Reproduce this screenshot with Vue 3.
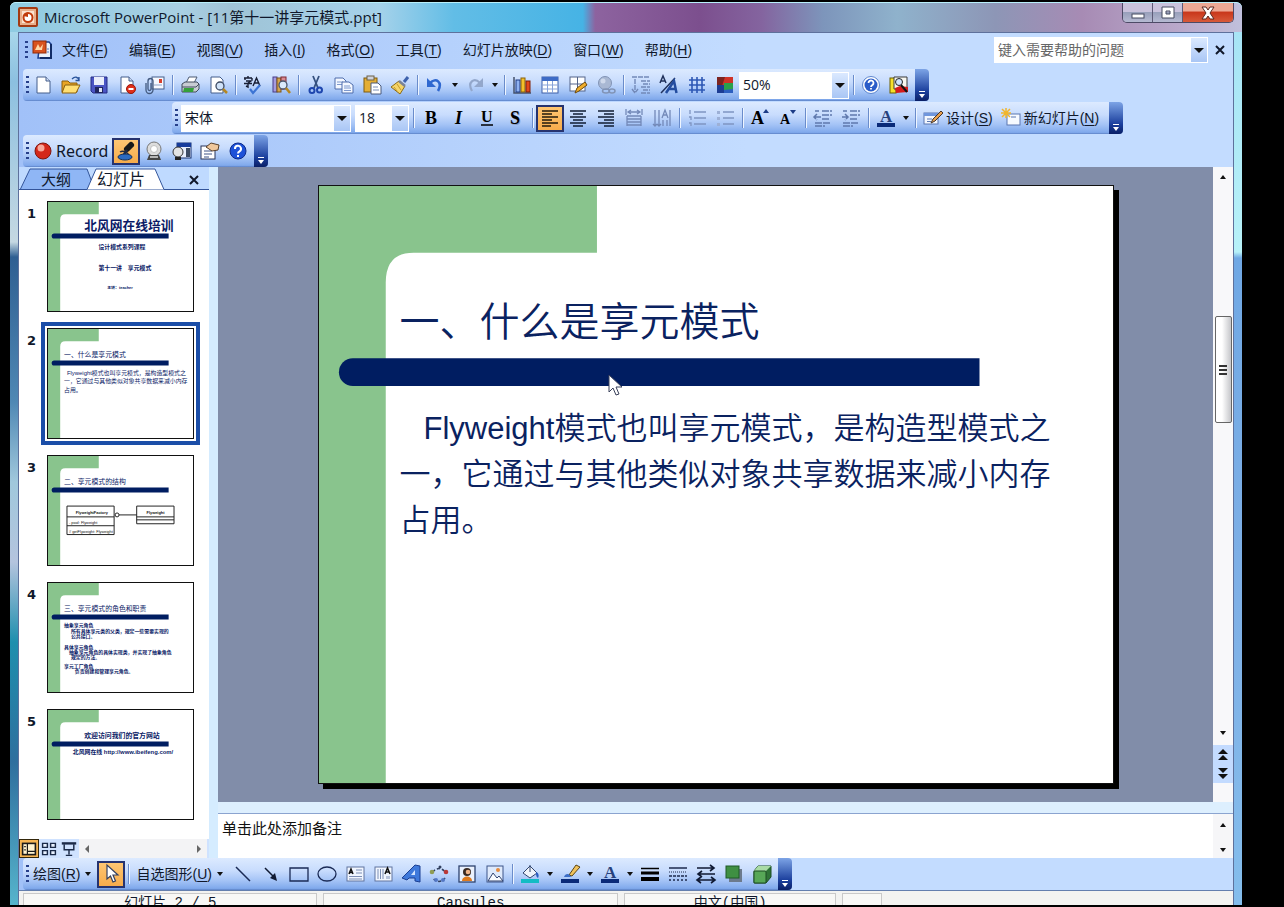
<script setup>
import { h } from 'vue'

const art = {
  app: '<rect x="1" y="1" width="18" height="18" rx="1" fill="#e9b08c" stroke="#a33a12" stroke-width="2"/><rect x="4" y="4" width="12" height="12" fill="#fbe3cf"/><circle cx="10" cy="10.500" r="4.500" fill="#fff" stroke="#c23c0c" stroke-width="2"/><path d="M10 10V5.500A5 5 0 0 0 5.500 9z" fill="#c23c0c"/>',
  doc: '<path d="M8 2h9l2 2v14H6z" fill="#e8f0fb" stroke="#1d3f8f" stroke-width="1.500"/><path d="M19 4v14H8" fill="none" stroke="#122c66" stroke-width="2"/><rect x="1" y="1" width="13" height="12" fill="#d9531e" stroke="#8f2a08"/><path d="M3 10l3-6 2 4 3-4-1 6z" fill="#ffd9a8"/><path d="M15 9h2M15 12h2" stroke="#5b7dc0"/>',
  new: '<path d="M4 2h9l4 4v12H4z" fill="#fff" stroke="#445e8c"/><path d="M13 2v4h4" fill="#cfdcf3" stroke="#445e8c"/>',
  open: '<path d="M1 6h6l2 2h7v9H1z" fill="#e8a526" stroke="#8a5e0c"/><path d="M4 10h15l-4 8H1z" fill="#ffdf73" stroke="#8a5e0c"/><path d="M11 4c3-3 6-2 7 1M18 2v3.500h-3.500" fill="none" stroke="#2a559c" stroke-width="1.300"/>',
  save: '<path d="M2 2h16v16H4l-2-2z" fill="#4b55c4" stroke="#252d85"/><rect x="5" y="2" width="10" height="8" fill="#e9edfb"/><rect x="6" y="12" width="8" height="6" fill="#20265f"/><rect x="10" y="13" width="3" height="4" fill="#dfe4f7"/>',
  perm: '<path d="M4 2h8l4 4v12H4z" fill="#fff" stroke="#445e8c"/><path d="M12 2v4h4" fill="#cfdcf3" stroke="#445e8c"/><circle cx="14" cy="14" r="4.500" fill="#df2f1b" stroke="#9c1608"/><path d="M11.500 14h5" stroke="#fff" stroke-width="2"/>',
  mail: '<rect x="7" y="2" width="12" height="12" fill="#f6f9ff" stroke="#445e8c"/><rect x="14" y="4" width="3" height="4" fill="#d8402a"/><path d="M9 10h8" stroke="#8fa3c8"/><path d="M1 8v7a3.500 3.500 0 0 0 7 0V6a2.500 2.500 0 0 0-5 0v8a1 1 0 0 0 3 0V8" fill="none" stroke="#42597f" stroke-width="1.300"/>',
  print: '<path d="M6 8l3-6h8l-3 6z" fill="#fff" stroke="#4c5a72"/><path d="M2 9l3-2h12l2 2v5l-3 3H2z" fill="#c8ccd3" stroke="#424c5e"/><path d="M2 12h14l3-3" fill="none" stroke="#424c5e"/><path d="M4 13h10l-1 4H3z" fill="#35a03b"/>',
  preview: '<path d="M3 2h9l3 3v13H3z" fill="#fff" stroke="#445e8c"/><circle cx="12" cy="11" r="4" fill="#cfe2f8" stroke="#3d4b63" stroke-width="1.300"/><path d="M15 14l4 4" stroke="#b58722" stroke-width="2.500"/>',
  spell: '<path d="M1 3h8M5 1v2M2 3v2M9 3v2M3 6h5L5 8v4l-2-1M1 8.500h8M10 11l3.500-8L17 11M11.500 8h4" fill="none" stroke="#161d33" stroke-width="1.400"/><path d="M7 14l3 4 7-8" fill="none" stroke="#3c74d4" stroke-width="2.200"/>',
  research: '<rect x="2" y="2" width="4" height="15" fill="#a59be0" stroke="#463c88"/><rect x="6" y="3" width="4" height="14" fill="#d6a64f" stroke="#7b5519"/><rect x="10" y="2" width="5" height="12" fill="#d98a92" stroke="#7d2932"/><circle cx="12" cy="10" r="4" fill="#dbe9fb" stroke="#49546a" stroke-width="1.300"/><path d="M15 13l4 5" stroke="#b58722" stroke-width="2.500"/>',
  cut: '<path d="M7 1l5 12M13 1L8 13" stroke="#35517f" stroke-width="1.800" fill="none"/><circle cx="6" cy="15.500" r="2.500" fill="none" stroke="#1e46ae" stroke-width="2"/><circle cx="13.500" cy="15" r="2.500" fill="none" stroke="#1e46ae" stroke-width="2"/>',
  copy: '<path d="M1 3h8l3 3v8H1z" fill="#f3f7ff" stroke="#4f6dab"/><path d="M3 7h6M3 9.500h6" stroke="#7d98cd"/><path d="M8 7h7l4 3v8H8z" fill="#f3f7ff" stroke="#4f6dab"/><path d="M10 11h6M10 13h7M10 15.500h7" stroke="#7d98cd"/>',
  paste: '<rect x="2" y="3" width="13" height="14" fill="#e4ae35" stroke="#7d5a11"/><rect x="5" y="1" width="7" height="4" fill="#cfd3dc" stroke="#6d6147"/><path d="M9 8h7l3 3v8H9z" fill="#fff" stroke="#4a5a7c"/><path d="M11 12h5M11 15h6" stroke="#7d8fb6"/>',
  brush: '<path d="M14 7l4-5" stroke="#3e62ad" stroke-width="3"/><path d="M9 6l6 5-5 8-9-7z" fill="#f5d569" stroke="#8d6b14"/><path d="M9 6l6 5" stroke="#7b8395" stroke-width="2.500"/><path d="M4 12l3 4M7 9l4 6" stroke="#c79a29"/>',
  undo: '<path d="M5 8c6-6 13-1 8 8" fill="none" stroke="#2f68d0" stroke-width="2.600"/><path d="M2 3v9h9z" fill="#2f68d0"/>',
  redo: '<path d="M15 8C9 2 2 7 7 16" fill="none" stroke="#93a7cb" stroke-width="2.200"/><path d="M18 3v9H9z" fill="#93a7cb"/>',
  chart: '<path d="M2 2v16h17" fill="none" stroke="#45516b" stroke-width="1.500"/><rect x="4" y="5" width="4" height="12" fill="#8fb2f2" stroke="#1e3a82"/><rect x="9" y="3" width="4" height="14" fill="#f3c02a" stroke="#8a6109"/><rect x="14" y="6" width="4" height="11" fill="#e2471c" stroke="#7e1f05"/>',
  table: '<rect x="2" y="2" width="16" height="16" fill="#fff" stroke="#3c5fa8"/><rect x="2" y="2" width="16" height="4" fill="#3d6bc6"/><path d="M7.500 6v12M12.500 6v12M2 10h16M2 14h16" stroke="#87a2d8"/>',
  draw: '<rect x="2" y="2" width="15" height="14" fill="#fff" stroke="#54658a"/><path d="M9.500 2v14M2 9h15" stroke="#54658a"/><path d="M7 18l2-5 8-6 2 3-8 6z" fill="#f1ae2b" stroke="#6c4a0d"/>',
  link: '<circle cx="9" cy="8" r="6.500" fill="#a9b8d3" stroke="#8193b5"/><circle cx="7" cy="6" r="2.500" fill="#cfd9eb"/><ellipse cx="10" cy="16" rx="3.500" ry="2" fill="none" stroke="#8193b5" stroke-width="1.500"/><ellipse cx="16" cy="16" rx="3" ry="2" fill="none" stroke="#8193b5" stroke-width="1.500"/>',
  expand: '<path d="M1 2h18M4 4v13M1 14l3 4 3-4M10 6h9M12 9h7M10 12h9M12 15h7M10 18h9" fill="none" stroke="#7389b8" stroke-width="1.400" stroke-dasharray="5 1"/>',
  format: '<path d="M1 8l3-7 3 7M2 6h4M2 18L16 3" fill="none" stroke="#20315c" stroke-width="1.500"/><path d="M7 18l8-12 2.500 12M10.500 14h6" fill="none" stroke="#234c9f" stroke-width="2.500"/>',
  grid: '<path d="M5 2v16M10 2v16M15 2v16M2 5h16M2 10h16M2 15h16" stroke="#2e58b5" stroke-width="1.600"/>',
  color: '<rect x="2" y="2" width="16" height="16" fill="#2d5fc0"/><path d="M2 2h16v8H2z" fill="#cf3327"/><path d="M2 2h8l-3 9H2z" fill="#7c2420"/><path d="M9 8h9v6l-9 1z" fill="#2aa04a"/><path d="M2 10h7v8H2z" fill="#1c3c94"/>',
  help: '<circle cx="10" cy="10" r="8.500" fill="#fff" stroke="#5d86cf"/><circle cx="10" cy="10" r="6.500" fill="#2a5cc8"/><path d="M7.500 8a2.500 2.500 0 1 1 4 2c-1 .7-1.500 1-1.500 2M10 13v1.500" fill="none" stroke="#fff" stroke-width="1.800"/>',
  book: '<rect x="1" y="3" width="6" height="15" fill="#f6e12a" stroke="#6c5f00"/><path d="M5 2h13v12H5z" fill="#f7f7f0" stroke="#3b3b3b"/><path d="M6 13l5-2 8 1v5l-12 1z" fill="#d51c1c"/><circle cx="10" cy="7" r="3.500" fill="#cfe4ff" stroke="#222"/><path d="M12 10l6 7" stroke="#111" stroke-width="2"/>',
  bold: '<text x="4" y="16" font-family="Liberation Serif, serif" font-weight="bold" font-size="18">B</text>',
  italic: '<text x="6" y="16" font-family="Liberation Serif, serif" font-style="italic" font-weight="bold" font-size="18">I</text>',
  under: '<text x="4" y="14" font-family="Liberation Serif, serif" font-weight="bold" font-size="16">U</text><path d="M4 17h12" stroke="#000" stroke-width="1.500"/>',
  shadow: '<text x="5" y="16" font-family="Liberation Serif, serif" font-weight="bold" font-size="18" style="text-shadow:1px 1px #8ba1cc">S</text>',
  left: '<path d="M2 3h16M2 6h10M2 9h16M2 12h10M2 15h16M2 18h9" stroke="#231b0c" stroke-width="1.600"/>',
  center: '<path d="M2 3h16M5 6h10M2 9h16M5 12h10M2 15h16M5 18h10" stroke="#111c33" stroke-width="1.600"/>',
  right: '<path d="M2 3h16M8 6h10M2 9h16M8 12h10M2 15h16M8 18h10" stroke="#111c33" stroke-width="1.600"/>',
  spread: '<path d="M2 1v6M18 1v6M4 4h12M3 8h14M3 11h14M3 14h14M3 17h14M3 8v10M17 8v10M7 2L4 4l3 2M13 2l3 2-3 2" fill="none" stroke="#7389b8" stroke-width="1.300"/>',
  vert: '<path d="M3 2v16M7 2v16M11 12v6M15 12v6M18 2v16M1 16l2 2 2-2M5 16l2 2 2-2M10 10l3-8 3 8M11 7h4" fill="none" stroke="#7389b8" stroke-width="1.300"/>',
  num: '<path d="M7 4h12M7 10h12M7 16h12M3 2v4M2 9h2v3M2 15h2v3" fill="none" stroke="#7f95c2" stroke-width="1.300"/>',
  bul: '<path d="M8 4h11M8 10h11M8 16h11" stroke="#7f95c2" stroke-width="1.300"/><path d="M2 3h3v3H2zM2 9h3v3H2zM2 15h3v3H2z" fill="#9db0d6"/>',
  bigger: '<text x="1" y="16" font-family="Liberation Serif, serif" font-weight="bold" font-size="18">A</text><path d="M13 5l3-4 3 4z" fill="#1d3c86"/>',
  smaller: '<text x="2" y="16" font-family="Liberation Serif, serif" font-weight="bold" font-size="14">A</text><path d="M12 2h6l-3 4z" fill="#1d3c86"/>',
  outdent: '<path d="M9 3h10M9 7h10M9 11h7M2 15h16M2 18h10M8 9H2M4 6L1 9l3 3M2 3h4" fill="none" stroke="#5f78ad" stroke-width="1.500" stroke-dasharray="7 1"/>',
  indent: '<path d="M9 3h10M9 7h10M9 11h7M2 15h16M2 18h10M1 9h5M4 6l3 3-3 3M2 3h4" fill="none" stroke="#5f78ad" stroke-width="1.500" stroke-dasharray="7 1"/>',
  fontcolor: '<text x="4" y="14" font-family="Liberation Serif, serif" font-weight="bold" font-size="17" fill="#27417c">A</text><rect x="1" y="15" width="18" height="4" fill="#0a2a78"/>',
  design: '<rect x="1" y="5" width="14" height="11" fill="#f4f8ff" stroke="#5b77b1"/><rect x="1" y="5" width="14" height="3" fill="#6f96dd"/><path d="M4 11h5M4 13.500h4" stroke="#5b77b1"/><path d="M8 15l2-4 8-8 2 2-8 8z" fill="#e9a04e" stroke="#45352a"/>',
  slide: '<rect x="6" y="6" width="13" height="11" fill="#f7faff" stroke="#5b77b1"/><path d="M10 9h5" stroke="#5b77b1"/><path d="M5 0v10M0 5h10M1 1l8 8M9 1L1 9" stroke="#f2b62c" stroke-width="1.500"/>',
  rec: '<circle cx="10" cy="10" r="8" fill="#d4281b" stroke="#7d1710"/><circle cx="8" cy="7" r="3.500" fill="#f8a99c"/>',
  mic: '<path d="M11 8l4-4" stroke="#191919" stroke-width="6" stroke-linecap="round"/><path d="M11 9l-4 6" stroke="#222b44" stroke-width="2.500"/><path d="M4 11c3-2 8 0 9 4" fill="none" stroke="#222b44" stroke-width="1.500"/><ellipse cx="9" cy="16" rx="7" ry="3" fill="#2c6ac0" stroke="#12305f"/>',
  cam: '<circle cx="10" cy="8" r="7" fill="#dcdcdc" stroke="#777"/><circle cx="10" cy="8" r="3.500" fill="#fff" stroke="#c0c0c0"/><path d="M5 14h10l2 5H3z" fill="#444"/><path d="M6 16h8" stroke="#ddd" stroke-width="1.500"/>',
  screen: '<rect x="5" y="2" width="14" height="15" fill="#e8eefb" stroke="#16306f"/><rect x="5" y="2" width="14" height="4" fill="#173c9c"/><path d="M14 7h4v9h-4z" fill="#3d4b63"/><circle cx="6" cy="11" r="5" fill="#e4e4e4" stroke="#333"/><path d="M3 16h6v3H3z" fill="#222"/>',
  props: '<rect x="1" y="5" width="14" height="13" fill="#fff" stroke="#29355a"/><path d="M4 10h8M4 13h8M4 16h5" stroke="#3c5286"/><path d="M6 6l5-4 8 2-1 5-6 1-3-2z" fill="#efc79c" stroke="#57402c"/>',
  ask: '<circle cx="10" cy="10" r="8" fill="#1d51d8" stroke="#0d2b8b"/><path d="M7 8a3 3 0 1 1 4.500 2.300C10.300 11 10 11.500 10 12.500M10 14v2" fill="none" stroke="#fff" stroke-width="2"/>',
  pointer: '<path d="M6 1v14l3.500-3 2.500 6 2.500-1-2.500-6h5z" fill="#fff" stroke="#333f5f" stroke-width="1.200"/>',
  line: '<path d="M3 3l14 14" stroke="#1a2a55" stroke-width="1.500"/>',
  arrow: '<path d="M4 4l9 9" stroke="#101a33" stroke-width="1.500"/><path d="M16 17l-2-8-5 5z" fill="#101a33"/>',
  rect: '<path d="M1 4h18v13H1z" fill="none" stroke="#1a2a55" stroke-width="1.300"/>',
  oval: '<ellipse cx="10" cy="10" rx="9" ry="7" fill="none" stroke="#1a2a55" stroke-width="1.300"/>',
  tbox: '<rect x="2" y="3" width="17" height="14" fill="#f1f6ff" stroke="#60749f"/><path d="M4 10l2-5 2 5M5 8.500h2" fill="none" stroke="#111" stroke-width="1.500"/><path d="M11 6h6M11 9h6M4 12.500h13M4 15h13" stroke="#7d8fb6"/>',
  vbox: '<rect x="2" y="3" width="17" height="14" fill="#f1f6ff" stroke="#60749f"/><path d="M5 5v10M7.500 5v10M10 5v10M14 12v3M16 12v3" stroke="#7d8fb6"/><path d="M12 10l2.500-6L17 10M13 8h3" fill="none" stroke="#111" stroke-width="1.500"/>',
  wordart: '<path d="M1 14L14 1l5 1v16l-5-1v-3H8l-2 2z" fill="#3f79db" stroke="#1b3f93"/><path d="M10 11l4-5v5z" fill="#d6e6ff"/>',
  diagram: '<path d="M4 8a7 7 0 0 1 12 0M16 14a7 7 0 0 1-12 0" fill="none" stroke="#31405f" stroke-width="1.500" stroke-dasharray="3 2"/><circle cx="3" cy="8" r="2.300" fill="#8f9c54"/><circle cx="17" cy="8" r="2.300" fill="#b93838"/><circle cx="7" cy="16" r="2" fill="#5377c4"/><circle cx="14" cy="16" r="2" fill="#5377c4"/><circle cx="11" cy="3" r="1.500" fill="#31405f"/>',
  clip: '<rect x="2" y="2" width="16" height="16" fill="#eaf1fd" stroke="#2d426f" stroke-width="1.300"/><circle cx="10" cy="8" r="4" fill="#3a2a22"/><circle cx="11" cy="8" r="2.300" fill="#f0b489"/><path d="M5 17c0-6 10-6 10 0z" fill="#df7a1d"/>',
  pic: '<rect x="2" y="2" width="16" height="16" fill="#dfeafc" stroke="#3c5589"/><circle cx="13" cy="6" r="2" fill="#e58b3e"/><path d="M3 17l5-8 4 5 2-2 4 5z" fill="#f9fbff" stroke="#2f4270"/>',
  fill: '<path d="M3 9l7-7 7 7-7 5z" fill="#f0f4fb" stroke="#33466f"/><path d="M10 1v7" stroke="#33466f"/><path d="M16 8c3 1 3 4 2 6-2-1-2-3-2-6z" fill="#2b5cc0"/><rect x="1" y="15" width="18" height="4" fill="#12bcc4"/>',
  ink: '<path d="M9 11l7-10 4 2-8 9z" fill="#f0c25c" stroke="#5b4513"/><path d="M4 13c1-4 6-4 7 0z" fill="#3b6dc6"/><rect x="1" y="15" width="18" height="4" fill="#0a2a78"/>',
  weight: '<path d="M1 4.500h18" stroke="#000" stroke-width="1.500"/><path d="M1 9h18" stroke="#000" stroke-width="3"/><path d="M1 15h18" stroke="#000" stroke-width="4"/>',
  dash: '<path d="M1 4h18" stroke="#1d2a4c" stroke-width="1.500"/><path d="M1 8h18" stroke="#1d2a4c" stroke-dasharray="1 1"/><path d="M1 12h18" stroke="#1d2a4c" stroke-width="1.500" stroke-dasharray="3 1"/><path d="M1 16h18" stroke="#1d2a4c" stroke-width="1.500" stroke-dasharray="2 2"/>',
  arrows: '<path d="M1 4h17M2 10h17M1 16h18M14 1l4 3-4 3M6 7l-4 3 4 3M5 13l-4 3 4 3M15 13l4 3-4 3" fill="none" stroke="#101a33" stroke-width="1.600"/>',
  shade: '<rect x="5" y="5" width="13" height="13" fill="#6c7a8d"/><rect x="2" y="2" width="13" height="12" fill="#3f8f42" stroke="#1f5a26"/>',
  cube: '<path d="M2 7l4-5h13v11l-5 6H2z" fill="#2f7437" stroke="#1d4d24"/><path d="M2 7l4-5h13l-5 5z" fill="#a9dba5"/><rect x="2" y="7" width="12" height="12" rx="1" fill="#57a757" stroke="#1d4d24"/>',
  normal: '<rect x="2" y="3" width="16" height="14" fill="#fff3cf" stroke="#1b1b1b" stroke-width="2"/><path d="M8 3v14M8 13h10M4 7h2M4 11h2" stroke="#1b1b1b" stroke-width="1.500"/>',
  sorter: '<path d="M2 3h6v5H2zM12 3h6v5h-6zM2 12h6v5H2zM12 12h6v5h-6z" fill="#e9f2ff" stroke="#1b2a48" stroke-width="1.800"/>',
  show: '<path d="M1 3h18" stroke="#1b2a48" stroke-width="3"/><path d="M4 4v7h12V4M10 11v6M6 18h8" fill="none" stroke="#1b2a48" stroke-width="1.800"/>'
}

const Icon = (props) => h('svg', { class: 'icon', viewBox: '0 0 20 20', 'aria-hidden': 'true', innerHTML: art[props.name] })
Icon.props = ['name']

const SlideArt = () => h('svg', { class: 'slide-art', viewBox: '0 0 797 600', preserveAspectRatio: 'none', 'aria-hidden': 'true', innerHTML:
  '<path d="M0 0H279V67H95Q67 67 67 97V600H0Z" fill="#89c48d"/><path d="M34 173H663V201H34a14 14 0 0 1 0-28Z" fill="#001d61"/>' })

const menus = [['文件', 'F'], ['编辑', 'E'], ['视图', 'V'], ['插入', 'I'], ['格式', 'O'], ['工具', 'T'], ['幻灯片放映', 'D'], ['窗口', 'W'], ['帮助', 'H']]

const parse = (s) => s.split(' ').map((n) => ({ n }))
const standard = parse('new open save perm mail | print preview | spell research | cut copy paste brush | undo v redo v | chart table draw link | expand format grid color')
const standardEnd = parse('| help book')
const formatting = parse('| bold italic under shadow | left* center right spread vert | num bul | bigger smaller | outdent indent | fontcolor v |')
const recording = parse('mic* cam screen props ask')
const shapes = parse('line arrow rect oval tbox vbox wordart diagram clip pic | fill v ink v fontcolor v weight dash arrows shade cube')

const Tools = (props) => props.items.map((it) => {
  if (it.n === '|') return h('i', { class: 'sep' })
  if (it.n === 'v') return h('button', { class: 'drop', type: 'button', 'aria-label': '更多' }, [h('i', { class: 'tri' })])
  const on = it.n.endsWith('*')
  const name = it.n.replace('*', '')
  return h('button', { class: ['tool', { on }], type: 'button', 'aria-label': name }, [h(Icon, { name })])
})
Tools.props = ['items']

const thumbs = [
  { lines: [[82, 29, 13, '北风网在线培训', 'b m'], [75, 48, 6, '设计模式系列课程', 'b m'], [78, 69, 6, '第十一讲　享元模式', 'b m'], [73, 89, 4, '主讲：teacher', 'b m']] },
  { active: true, lines: [[16, 29, 7, '一、什么是享元模式', ''], [19, 47, 6, 'Flyweight模式也叫享元模式，是构造型模式之', ''], [16, 55, 6, '一，它通过与其他类似对象共享数据来减小内存', ''], [16, 64, 6, '占用。', '']] },
  { uml: true, lines: [[16, 29, 7, '二、享元模式的结构', '']] },
  { lines: [[16, 29, 7, '三、享元模式的角色和职责', ''], [16, 45, 5, '抽象享元角色', 'b'], [23, 51, 5, '所有具体享元类的父类，规定一些需要实现的', 'b'], [23, 56, 5, '公共接口。', 'b'], [16, 67, 5, '具体享元角色', 'b'], [21, 72, 5, '抽象享元角色的具体实现类，并实现了抽象角色', 'b'], [23, 77, 5, '规定的方法。', 'b'], [16, 87, 5, '享元工厂角色', 'b'], [27, 92, 5, '负责创建和管理享元角色。', 'b']] },
  { lines: [[75, 29, 7, '欢迎访问我们的官方网站', 'b m'], [76, 45, 6, '北风网在线 http://www.ibeifeng.com/', 'b m']] }
]
</script>

<template>
  <main class="desktop">
    <div class="window">
      <header class="titlebar">
        <Icon name="app" />
        <h1>Microsoft PowerPoint - [11第十一讲享元模式.ppt]</h1>
        <div class="caption">
          <button type="button" aria-label="最小化"><svg viewBox="0 0 16 14"><rect x="2" y="8" width="12" height="4" fill="#fff" stroke="#444a60" /></svg></button>
          <button type="button" aria-label="最大化"><svg viewBox="0 0 16 14"><path d="M2 1h12v11H2zM6 5v3h4V5z" fill="#fff" fill-rule="evenodd" stroke="#444a60" /></svg></button>
          <button type="button" class="close" aria-label="关闭"><svg viewBox="0 0 16 14"><path d="M2 1h4l2 3 2-3h4l-4 6 4 6h-4L8 10l-2 3H2l4-6z" fill="#fff" stroke="#5d2920" /></svg></button>
        </div>
      </header>

      <div class="frame">
        <nav class="menubar">
          <i class="grip"></i>
          <Icon name="doc" />
          <button v-for="m in menus" :key="m[1]" type="button" class="menu">{{ m[0] }}(<u>{{ m[1] }}</u>)</button>
          <div class="ask">
            <input type="text" placeholder="键入需要帮助的问题" aria-label="键入需要帮助的问题" />
            <button type="button" class="arrowbox" aria-label="展开"><i class="tri big"></i></button>
          </div>
          <button type="button" class="x" aria-label="关闭文档"><svg viewBox="0 0 10 10"><path d="M1 1l8 8M9 1L1 9" /></svg></button>
        </nav>

        <div class="bars">
          <div class="toolbar">
            <i class="grip"></i>
            <Tools :items="standard" />
            <div class="combo zoom"><select aria-label="显示比例"><option>50%</option></select><span class="arrowbox"><i class="tri big"></i></span></div>
            <Tools :items="standardEnd" />
            <button type="button" class="end" aria-label="工具栏选项"><i class="tri light"></i></button>
          </div>
          <div class="toolbar second">
            <i class="grip"></i>
            <div class="combo font"><select aria-label="字体"><option>宋体</option></select><span class="arrowbox"><i class="tri big"></i></span></div>
            <div class="combo size"><select aria-label="字号"><option>18</option></select><span class="arrowbox"><i class="tri big"></i></span></div>
            <Tools :items="formatting" />
            <button type="button" class="labeled"><Icon name="design" />设计(<u>S</u>)</button>
            <button type="button" class="labeled"><Icon name="slide" />新幻灯片(<u>N</u>)</button>
            <button type="button" class="end" aria-label="工具栏选项"><i class="tri light"></i></button>
          </div>
          <div class="toolbar">
            <i class="grip"></i>
            <button type="button" class="labeled record"><Icon name="rec" />Record</button>
            <Tools :items="recording" />
            <button type="button" class="end" aria-label="工具栏选项"><i class="tri light"></i></button>
          </div>
        </div>

        <div class="work">
          <aside class="panel">
            <div class="tabs">
              <svg class="tabshape" viewBox="0 0 190 23" preserveAspectRatio="none" aria-hidden="true">
                <path d="M1 23L11 2H68L76 23Z" fill="#8fb6f5" stroke="#33559a" />
                <path d="M0 22.500H68L77 2H136L145 22.500H190V23H0Z" fill="#fff" stroke="#33559a" />
              </svg>
              <button type="button" class="tab">大纲</button>
              <button type="button" class="tab current">幻灯片</button>
              <button type="button" class="x" aria-label="关闭窗格"><svg viewBox="0 0 10 10"><path d="M1 1l8 8M9 1L1 9" /></svg></button>
            </div>
            <ol class="list">
              <li v-for="(t, i) in thumbs" :key="i">
                <b>{{ i + 1 }}</b>
                <div class="thumb" :class="{ active: t.active }">
                  <SlideArt />
                  <svg class="thumb-text" viewBox="0 0 147 111">
                    <text v-for="(l, k) in t.lines" :key="k" :x="l[0]" :y="l[1]" :font-size="l[2]" :class="l[4]">{{ l[3] }}</text>
                    <g v-if="t.uml">
                      <path class="box" d="M19 51h48v29H19zM19 62h48M19 71h48M90 51h38v18H90zM90 62h38M90 65h38M72 60h18" />
                      <circle class="box" cx="70" cy="60" r="2" />
                      <text class="k b" x="28" y="59">FlyweightFactory</text>
                      <text class="k" x="21" y="69">- pool: Flyweight</text>
                      <text class="k" x="21" y="78"># getFlyweight: Flyweight</text>
                      <text class="k b" x="100" y="59">Flyweight</text>
                    </g>
                  </svg>
                </div>
              </li>
            </ol>
            <div class="views">
              <button type="button" class="on" aria-label="普通视图"><Icon name="normal" /></button>
              <button type="button" aria-label="幻灯片浏览视图"><Icon name="sorter" /></button>
              <button type="button" aria-label="幻灯片放映"><Icon name="show" /></button>
              <div class="hscroll"><i class="side l"></i><i class="side r"></i></div>
            </div>
          </aside>

          <section class="main">
            <div class="stage">
              <div class="canvas">
                <article class="slide">
                  <SlideArt />
                  <h2>一、什么是享元模式</h2>
                  <p>Flyweight模式也叫享元模式，是构造型模式之一，它通过与其他类似对象共享数据来减小内存占用。</p>
                  <svg class="cursor" viewBox="0 0 15 23" aria-hidden="true"><path d="M1 1v17l4-4 3 7 3-1-3-7h6z" fill="#fff" stroke="#39405a" /></svg>
                </article>
              </div>
              <div class="vscroll">
                <i class="tri up"></i>
                <i class="before"></i>
                <i class="handle"><span></span></i>
                <i class="after"></i>
                <i class="tri"></i>
                <div class="jump">
                  <button type="button" aria-label="上一张幻灯片"><i class="tri up big"></i><i class="tri up big"></i></button>
                  <button type="button" aria-label="下一张幻灯片"><i class="tri big"></i><i class="tri big"></i></button>
                </div>
              </div>
            </div>
            <div class="notes">
              <textarea aria-label="备注">单击此处添加备注</textarea>
              <div class="nscroll"><i class="tri up"></i><i class="tri"></i></div>
            </div>
          </section>
        </div>

        <div class="drawing">
          <div class="toolbar">
            <i class="grip"></i>
            <button type="button" class="labeled draw">绘图(<u>R</u>)<i class="tri"></i></button>
            <button type="button" class="tool on" aria-label="选择对象"><Icon name="pointer" /></button>
            <i class="sep"></i>
            <button type="button" class="labeled draw">自选图形(<u>U</u>)<i class="tri"></i></button>
            <Tools :items="shapes" />
            <button type="button" class="end" aria-label="工具栏选项"><i class="tri light"></i></button>
          </div>
        </div>

        <footer class="status">
          <span class="s1">幻灯片 2 / 5</span>
          <span class="s1">Capsules</span>
          <span class="s2">中文(中国)</span>
          <span class="s3"></span>
        </footer>
      </div>
    </div>
  </main>
</template>

<style>
html, body, #app { height: 100%; }
body { margin: 0; background: #000; }
</style>

<style scoped>
* { box-sizing: border-box; }
.desktop {
  height: 100vh; padding: 2px 42px 2px 10px; background: #000; overflow: hidden;
  font: 14px/20px "Liberation Sans", "Noto Sans CJK SC", sans-serif; color: #10182b;
}
.desktop :deep(button) { font: inherit; color: inherit; border: 0; padding: 0; background: none; flex: none; }
.desktop :deep(i) { display: block; flex: none; }
.desktop :deep(.icon) { width: 20px; height: 20px; flex: none; display: block; overflow: visible; }
.window {
  height: 100%; padding: 0 8px; display: flex; flex-direction: column; border-radius: 6px 6px 0 0; position: relative;
  background:
    linear-gradient(180deg, #b9e4f0 0, #8cc0e0 80px, #c5d8e2 240px, #2f5f92 255px, #4f88b4 400px, #a0c8dc 480px, #b4c4de 560px, #1e8fae 640px, #2f6f9e 760px, #56b4cc 100%) left / 10px 100% no-repeat,
    linear-gradient(180deg, #a5e2f5 0, #b7f1f8 250px, #70a8e4 256px, #7fb0e6 600px, #84bdec 100%) right / 10px 100% no-repeat,
    #78aee0;
}
.titlebar {
  height: 30px; margin: 0 -8px; padding: 0 8px 2px; display: flex; align-items: center; gap: 6px; flex: none;
  border-top: 1px solid #b8effa; border-radius: 6px 6px 0 0;
  background: linear-gradient(90deg, #8fcbe2 0, #a9cfe3 14%, #9fc3d6 18%, #a5d2ea 30%, #62bde6 36%, #46b3e5 46.500%, #8d639f 47.500%, #7c4f8e 56%, #84649f 61%, #7d95bb 66%, #8fb2cc 72%, #8d96b6 80%, #a78bb4 87%, #baa9cb 95%, #c0c0dc 100%);
}
h1 { margin: 0; flex: 1; font: 15px/22px "Open Sans", "Noto Sans CJK SC", sans-serif; white-space: nowrap; }
.caption { align-self: flex-start; display: flex; border: 1px solid #4d4a66; border-top: 0; border-radius: 0 0 5px 5px; overflow: hidden; }
.caption button { width: 30px; height: 19px; display: grid; place-items: center; border-right: 1px solid #5d5a76; background: linear-gradient(#c9c2dc 0 45%, #98a0bb 50%, #b6bad2); }
.caption button.close { width: 50px; border-right: 0; background: linear-gradient(#eda894 0 40%, #c9381c 50%, #d85a3a); }
.caption svg { width: 16px; height: 14px; }
.frame { flex: 1; min-height: 0; display: flex; flex-direction: column; border: 1px solid #5e719c; border-bottom: 0; background: linear-gradient(90deg, #a1c1f8, #c3dcff 60%); }

.menubar { height: 36px; flex: none; display: flex; align-items: center; padding: 0 8px 2px 6px; }
.grip { width: 3px; height: 18px; background: repeating-linear-gradient(#27408b 0 2px, transparent 2px 5px); }
.menubar .icon { margin: 0 9px 0 3px; width: 22px; }
.menu { margin-right: 21px !important; white-space: nowrap; }
u { text-underline-offset: 2px; }
.ask { margin-left: auto; width: 214px; height: 26px; display: flex; background: #fff; padding: 1px; }
.ask input { flex: 1; min-width: 0; border: 0; padding: 0 3px; font: inherit; background: none; }
.ask input::placeholder { color: #666; opacity: 1; }
.arrowbox { width: 16px; display: grid; place-items: center; background: linear-gradient(#dbe9ff, #a9c6f5) !important; }
.x { width: 10px; height: 10px; margin-left: 7px !important; display: block; }
.x svg { display: block; width: 10px; height: 10px; }
.x path { stroke: #10182b; stroke-width: 2; fill: none; }

.desktop :deep(.tri) { width: 0; height: 0; border: 3px solid transparent; border-top: 4px solid #111; border-bottom: 0; }
.desktop :deep(.tri.big) { border-width: 5px 5px 0; }
.desktop :deep(.tri.up) { border-top: 0; border-bottom: 4px solid #111; }
.desktop :deep(.tri.up.big) { border-bottom-width: 5px; }
.desktop :deep(.tri.light) { border-top-color: #fff; }

.bars { display: flex; flex-direction: column; align-items: flex-start; gap: 1px; flex: none; padding-left: 4px; }
.toolbar {
  height: 32px; display: flex; align-items: center; padding-left: 3px; flex: none; border-radius: 4px;
  background: linear-gradient(#dceaff 0, #c8dcfd 40%, #a5c4f6 70%, #80a9ec 95%, #5b80c4 100%);
}
.second > .grip { margin-right: 3px; }
.second { margin-left: 149px; }
.toolbar :deep(.tool) { width: 28px; height: 27px; display: grid; place-items: center; }
.toolbar :deep(.tool.on) { border: 2px solid #26336f; background: linear-gradient(#ffc672, #f6ac4c); }
.toolbar :deep(.drop) { width: 12px; height: 26px; display: grid; place-items: center; }
.toolbar :deep(.sep) { width: 1px; height: 20px; margin: 0 3px; background: #6a8ccb; box-shadow: 1px 0 #eef5ff; }
.end { width: 14px; height: 32px; margin-left: 2px !important; border-radius: 0 4px 4px 0; background: linear-gradient(#7da4e6, #1a3e9c 70%, #0a1f66) !important; position: relative; }
.end .tri { position: absolute; left: 4px; bottom: 3px; }
.end::before { content: ""; position: absolute; left: 4px; bottom: 9px; width: 6px; height: 1px; background: #fff; }
.combo { position: relative; height: 27px; background: #fff; }
.combo select { appearance: none; width: 100%; height: 100%; border: 0; padding: 0 18px 0 4px; font: 14px/20px "Open Sans", "Noto Sans CJK SC", sans-serif; background: none; color: inherit; }
.combo .arrowbox { position: absolute; right: 1px; top: 1px; bottom: 1px; pointer-events: none; }
.zoom { width: 110px; margin-right: 1px; }
.font { width: 170px; margin-right: 4px; }
.size { width: 54px; margin-right: 1px; }
.labeled { display: flex; align-items: center; white-space: nowrap; height: 27px; }
.labeled .icon { margin-right: 3px; }
.second .labeled { margin: 0 4px; }
.second .end { margin-left: 6px !important; }
.record { margin-right: 4px; font-family: "Noto Sans", sans-serif !important; font-size: 16px !important; padding-left: 4px !important; }

.work { flex: 1; min-height: 0; display: flex; background: #d5ecff; }
.panel { width: 190px; flex: none; display: flex; flex-direction: column; background: #fff; }
.tabs { height: 23px; flex: none; position: relative; display: flex; align-items: center; background: #bfdaff; padding: 3px 10px 0 22px; }
.tabshape { position: absolute; inset: 0; width: 100%; height: 100%; }
.tabs button { position: relative; }
.tab { font-size: 15px !important; }
.tab.current { margin-left: 26px !important; font-size: 16px !important; }
.tabs .x { margin-left: auto !important; }
.list { margin: 0; padding: 11px 0 0 8px; list-style: none; flex: 1; min-height: 0; overflow: hidden; }
li { display: flex; margin-bottom: 16px; }
li b { width: 20px; font: bold 13px/18px "DejaVu Sans", sans-serif; padding-top: 4px; }
.thumb { position: relative; width: 147px; height: 111px; border: 1px solid #111; background: #fff; flex: none; }
.thumb.active { outline: 4px solid #1b4ea8; outline-offset: 2px; }
.desktop :deep(.slide-art) { position: absolute; inset: 0; width: 100%; height: 100%; display: block; }
.thumb-text { position: absolute; inset: 0; width: 100%; height: 100%; fill: #0a1a66; }
.thumb-text .b { font-weight: bold; }
.thumb-text .m { text-anchor: middle; }
.thumb-text .k { fill: #111; font-size: 4px; }
.box { fill: none; stroke: #222; }
.views { height: 19px; flex: none; display: flex; align-items: center; background: #cfe2ff; }
.views button { width: 20px; height: 19px; display: grid; place-items: center; }
.views button.on { border: 1px solid #33260a; background: #f5b553 !important; }
.views .icon { width: 16px !important; height: 16px !important; }
.hscroll { flex: 1; height: 100%; margin-right: 2px; display: flex; justify-content: space-between; align-items: center; padding: 0 6px; background: #f3f3f5; }
.side { border: 4px solid transparent; }
.side.l { border-right: 4px solid #666; border-left: 0; }
.side.r { border-left: 4px solid #666; border-right: 0; }

.main { flex: 1; min-width: 0; margin-left: 9px; display: flex; flex-direction: column; }
.stage { flex: 1; min-height: 0; display: flex; background: #818da9; }
.canvas { flex: 1; min-width: 0; display: grid; place-items: center; }
.slide {
  position: relative; width: 80%; aspect-ratio: 797 / 600; background: #fff; border: 1px solid #111; box-shadow: 5px 5px #000;
  color: #0a2260; padding: 108px 60px 0 81px; font-weight: 350;
}
.slide h2 { position: relative; margin: 0; font-size: 40px; line-height: 56px; font-weight: 350; }
.slide p { position: relative; margin: 56px 0 0; font-size: 31px; line-height: 46px; text-indent: 24px; }
.cursor { position: absolute; left: 36.500%; top: 31.500%; width: 15px; height: 23px; }
.vscroll { width: 20px; flex: none; display: flex; flex-direction: column; align-items: center; padding: 8px 0 19px; background: #f8f8fa; }
.before { flex: 137 0 0 !important; }
.handle { flex: 105 0 0 !important; width: 17px; display: grid !important; place-items: center; border: 1px solid #666; border-radius: 2px; background: linear-gradient(90deg, #fff 40%, #c5c6ca); }
.handle span { width: 8px; height: 10px; background: repeating-linear-gradient(#333 0 2px, transparent 2px 4px); }
.after { flex: 308 0 0 !important; }
.jump { margin-top: 10px; width: 20px; background: #c3dbff; }
.jump button { width: 20px; height: 19px; display: flex; flex-direction: column; align-items: center; justify-content: center; gap: 1px; }
.notes { height: 56px; flex: none; border-top: 11px solid #ddeffe; display: flex; background: #fff; }
.notes textarea { flex: 1; min-width: 0; border: 0; border-top: 1px solid #8ba4d0; padding: 5px 4px; resize: none; font: 15px/20px "Liberation Sans", "Noto Sans CJK SC", sans-serif; color: #111; }
.nscroll { width: 20px; border-top: 1px solid #8ba4d0; background: #f6f6f8; display: flex; flex-direction: column; justify-content: space-between; align-items: center; padding: 9px 0 6px; }

.drawing { flex: none; padding-left: 4px; border-bottom: 1px solid #647fae; display: flex; }
.draw { gap: 0; margin-right: 4px; padding-left: 4px !important; }
.draw .tri { margin: 0 2px 0 5px; }
.status { height: 14px; flex: none; overflow: hidden; display: flex; gap: 6px; padding: 2px 4px 0; background: #f3f3f1; font: 14px/18px "Liberation Mono", "Noto Sans CJK SC", monospace; }
.status span { height: 22px; border: 1px solid #c9c9c9; text-align: center; background: #f8f8f6; }
.s1 { flex: 296; }
.s2 { flex: 213; }
.s3 { flex: 38; margin-right: 347px; }
</style>
